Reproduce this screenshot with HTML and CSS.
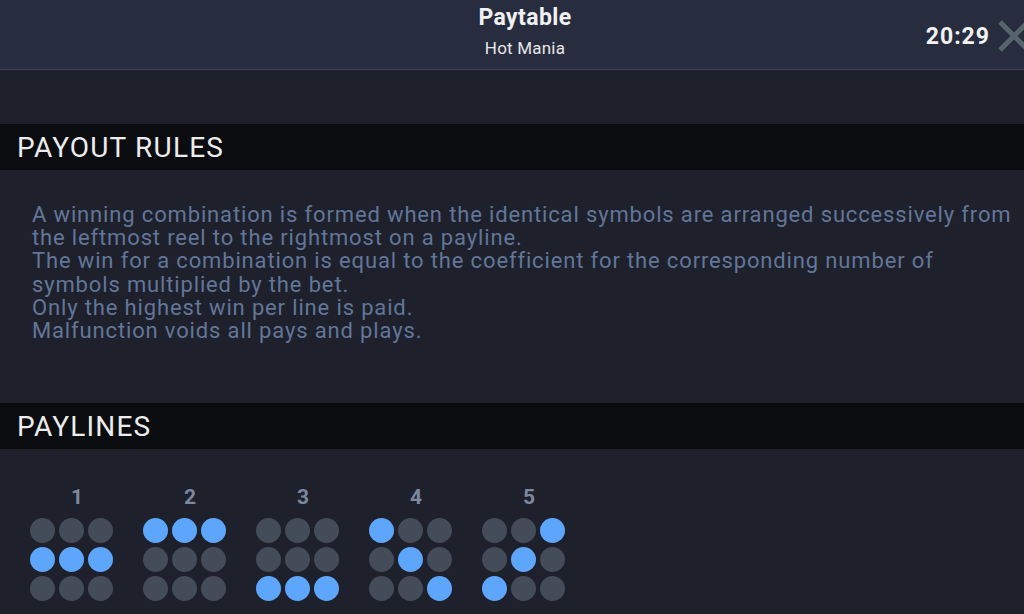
FILE: index.html
```html
<!DOCTYPE html>
<html lang="en">
<head>
  <meta charset="UTF-8">
  <title>Paytable</title>
  <link rel="stylesheet" href="styles.css">
</head>
<body>

  <header class="topbar">
    <div class="topbar-title">
      <div class="title">Paytable</div>
      <div class="subtitle">Hot Mania</div>
    </div>
    <div class="topbar-right">
      <span class="clock">20:29</span>
      <svg class="close" width="32" height="32" viewBox="0 0 32 32">
        <path d="M2 2 L30 30 M30 2 L2 30" stroke="#56646b" stroke-width="5"/>
      </svg>
    </div>
  </header>

  <main class="content">
    <section class="block">
      <h2 class="block-head">PAYOUT RULES</h2>
      <div class="rules">
        <p>A winning combination is formed when the identical symbols are arranged successively from<br>the leftmost reel to the rightmost on a payline.</p>
        <p>The win for a combination is equal to the coefficient for the corresponding number of<br>symbols multiplied by the bet.</p>
        <p>Only the highest win per line is paid.</p>
        <p>Malfunction voids all pays and plays.</p>
      </div>
    </section>

    <section class="block">
      <h2 class="block-head">PAYLINES</h2>
      <div class="lines" id="lines"></div>
    </section>
  </main>

  <script>
    // which row is lit on each reel (0 = top)
    const paylines = [
      [1, 1, 1],
      [0, 0, 0],
      [2, 2, 2],
      [0, 1, 2],
      [2, 1, 0]
    ];

    const linesBox = document.getElementById('lines');
    paylines.forEach((rows, i) => {
      const line = document.createElement('div');
      line.className = 'line';
      let html = `<div class="line-num">${i + 1}</div><div class="grid">`;
      for (let r = 0; r < 3; r++) {
        for (let c = 0; c < 3; c++) {
          html += `<span class="dot${rows[c] === r ? ' on' : ''}"></span>`;
        }
      }
      html += '</div>';
      line.innerHTML = html;
      linesBox.appendChild(line);
    });
  </script>
</body>
</html>
```

FILE: styles.css
```css
* {
  box-sizing: border-box;
}

body {
  margin: 0;
  background: #1e212b;
  font-family: Roboto, "Noto Sans", sans-serif;
  color: #fff;
  overflow: hidden;
}

.topbar {
  height: 70px;
  background: #272d3f;
  border-bottom: 1px solid #394057;
  display: flex;
  justify-content: center;
  padding-left: 26px;
  position: relative;
}

.topbar-title {
  text-align: center;
  padding-top: 4px;
}

.title {
  font-size: 23px;
  font-weight: 700;
  color: #f1f1f1;
  line-height: 27px;
  letter-spacing: 0.4px;
}

.subtitle {
  font-size: 17px;
  color: #e6e6e6;
  margin-top: 6px;
  line-height: 22px;
  letter-spacing: 0.2px;
}

.topbar-right {
  position: absolute;
  right: -6px;
  top: 20px;
  display: flex;
  align-items: center;
  gap: 8px;
}

.clock {
  font-size: 23px;
  font-weight: 700;
  color: #f2f2f2;
  letter-spacing: 1px;
}

.content {
  padding-top: 54px;
}

.block-head {
  margin: 0;
  height: 46px;
  background: #0b0c0f;
  color: #ececec;
  font-size: 28px;
  font-weight: 400;
  line-height: 48px;
  padding-left: 17px;
  letter-spacing: 1.2px;
}

.rules {
  padding: 33px 0 61px 32px;
  font-size: 22px;
  line-height: 23.2px;
  letter-spacing: 0.85px;
  color: #62769a;
  white-space: nowrap;
}

.rules p {
  margin: 0;
}

.lines {
  display: flex;
  gap: 30px;
  padding: 36px 0 0 30px;
}

.line {
  display: flex;
  flex-direction: column;
  align-items: center;
}

.line-num {
  font-size: 21px;
  font-weight: 700;
  color: #7c88a0;
  line-height: 24px;
  margin-bottom: 9px;
  padding-left: 11px;
}

.grid {
  display: grid;
  grid-template-columns: repeat(3, 25px);
  gap: 4px;
}

.dot {
  width: 25px;
  height: 25px;
  border-radius: 50%;
  background: #444c59;
}

.dot.on {
  background: #5ea6fc;
}
```
